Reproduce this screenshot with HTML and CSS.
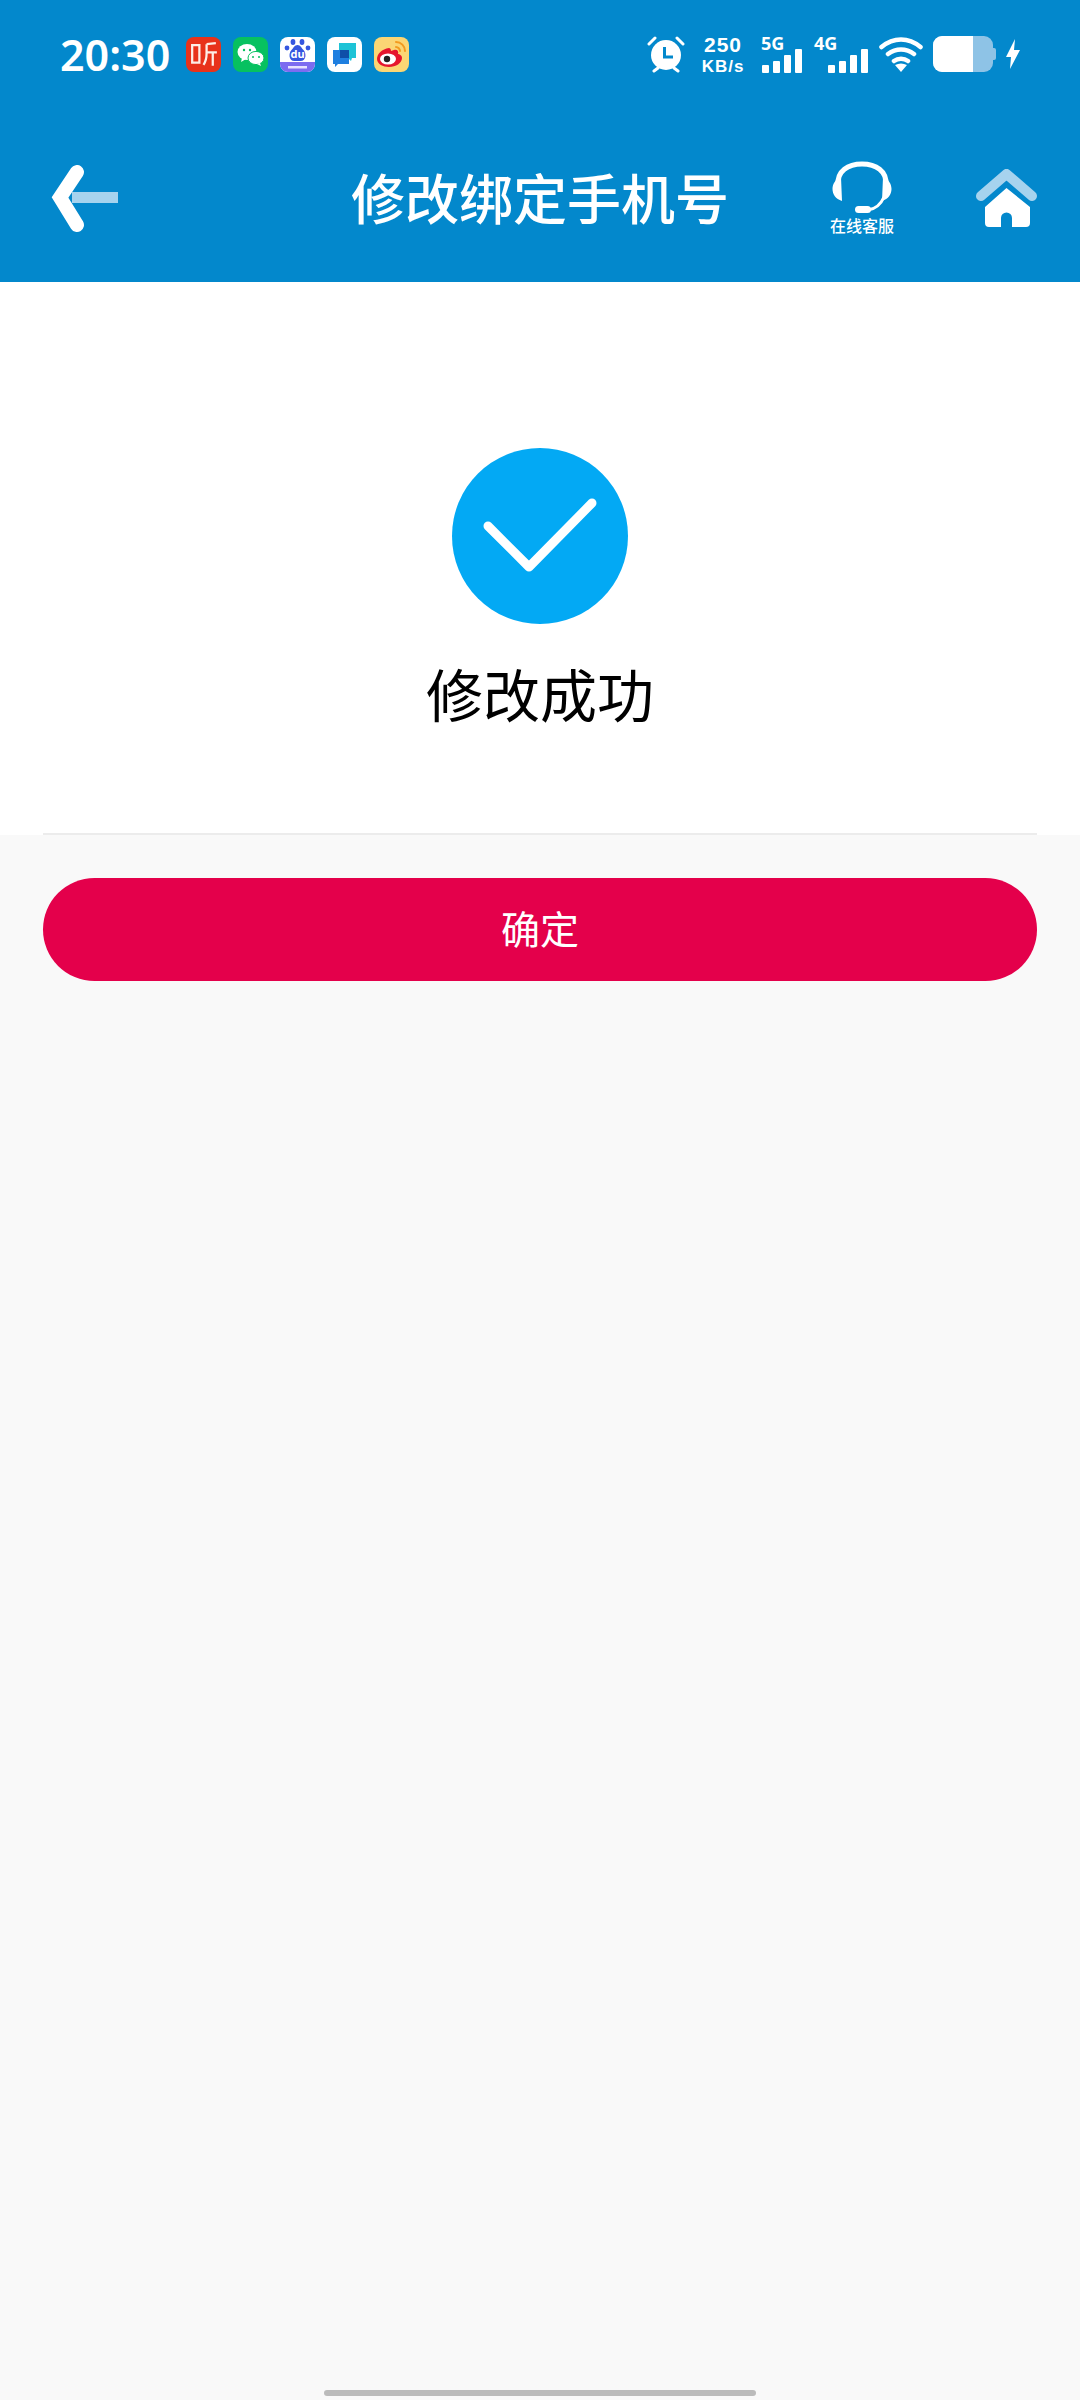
FILE: index.html
```html
<!DOCTYPE html>
<html lang="zh-CN">
<head>
	<meta charset="UTF-8">
	<title>修改绑定手机号</title>
	<link rel="stylesheet" href="styles.css">
</head>
<body>
	<div class="header">
		<div class="status">
			<div class="status-left">
				<span class="time">20:30</span>
				<div class="apps">
					<div class="app app-ting">
						<svg viewBox="0 0 34 34"><path d="M6 8h7v17H6zM20 7l9-1M20 7v9c0 5-1 8-3 11M20 15h10M26 15v13" fill="none" stroke="#fdeee6" stroke-width="2.200"/></svg>
					</div>
					<div class="app app-wechat">
						<svg viewBox="0 0 35 35"><ellipse cx="14" cy="15" rx="9.500" ry="8" fill="#fff"/><path d="M9 21l-1 4 5-3z" fill="#fff"/><ellipse cx="23" cy="21" rx="8" ry="6.600" fill="#fff" stroke="#07c160" stroke-width="1"/><path d="M27 26l1 3-4-2z" fill="#fff"/><circle cx="11" cy="13" r="1.200" fill="#07c160"/><circle cx="17" cy="13" r="1.200" fill="#07c160"/><circle cx="20" cy="20" r="1" fill="#07c160"/><circle cx="26" cy="20" r="1" fill="#07c160"/></svg>
					</div>
					<div class="app app-baidu">
						<svg viewBox="0 0 35 35"><path d="M0 25h35v5a5 5 0 0 1-5 5H5a5 5 0 0 1-5-5z" fill="#7c6cf0"/><ellipse cx="13" cy="5" rx="2.400" ry="3" fill="#3557e0"/><ellipse cx="22" cy="5" rx="2.400" ry="3" fill="#3557e0"/><circle cx="7" cy="11" r="2.400" fill="#3557e0"/><circle cx="28" cy="11" r="2.400" fill="#3557e0"/><path d="M17.500 8c3 0 4 3 6 5 3 3 3 11-3 11h-6c-6 0-6-8-3-11 2-2 3-5 6-5z" fill="#3557e0"/><text x="17.500" y="21" text-anchor="middle" class="app-du">du</text><rect x="8" y="29" width="19" height="2.500" fill="#e6e2ff"/></svg>
					</div>
					<div class="app app-msg">
						<svg viewBox="0 0 35 35"><path d="M12 6h17v15h-4l-1 3-3-3h-9z" fill="#1ec3d6"/><path d="M6 13h16v14H11l-3 3v-3H6z" fill="#1f7fe0"/><rect x="13" y="13" width="9" height="8" fill="#0f4fa8"/></svg>
					</div>
					<div class="app app-weibo">
						<svg viewBox="0 0 35 35"><path d="M15 11C8 12 3 17 3 22c0 5 6 8 12 8 7 0 13-4 13-9 0-3-3-4-4-4 1-3-1-5-4-4l-3 1c0-2-1-3-2-3z" fill="#e6162d"/><ellipse cx="14" cy="22" rx="8" ry="5.500" fill="#fff"/><circle cx="13" cy="22" r="3.200" fill="#222"/><path d="M22 5c5 0 9 4 9 9M22 10c2 0 4 2 4 4" fill="none" stroke="#f39a1f" stroke-width="2" stroke-linecap="round"/></svg>
					</div>
				</div>
			</div>
			<div class="status-right">
				<svg class="ic-alarm" viewBox="0 0 38 38">
					<circle cx="19" cy="20" r="15" fill="#fff"/>
					<path d="M17.500 12v10H26" fill="none" stroke="#0388cc" stroke-width="3"/>
					<path d="M2 9l6-6M36 9l-6-6M7 36l4-3M31 36l-4-3" stroke="#fff" stroke-width="3" stroke-linecap="round"/>
				</svg>
				<div class="speed"><span class="speed-num">250</span><span class="speed-unit">KB/s</span></div>
				<div class="net net-5g">
					<span class="net-label">5G</span>
					<div class="bars"><i class="bar-1"></i><i class="bar-2"></i><i class="bar-3"></i><i class="bar-4"></i></div>
				</div>
				<div class="net net-4g">
					<span class="net-label">4G</span>
					<div class="bars"><i class="bar-1"></i><i class="bar-2"></i><i class="bar-3"></i><i class="bar-4"></i></div>
				</div>
				<svg class="ic-wifi" viewBox="0 0 44 36">
					<path d="M2.500 11c12-10 27-10 39 0M9 18c8-6 18-6 26 0M15 25c4-3 10-3 14 0" fill="none" stroke="#fff" stroke-width="4.500" stroke-linecap="round"/>
					<path d="M16 29c4-2 8-2 12 0l-6 7z" fill="#fff"/>
				</svg>
				<div class="battery"><div class="battery-body"><div class="battery-fill"></div></div><div class="battery-tip"></div></div>
				<svg class="ic-bolt" viewBox="0 0 14 30"><path d="M9 0L0 18h5l-1 12 10-19H8z" fill="#fff"/></svg>
			</div>
		</div>
		<div class="nav">
			<div class="nav-left">
				<svg class="ic-back" viewBox="0 0 70 68">
					<rect x="22" y="27" width="46" height="11" fill="#a6d3ee"/>
					<path d="M27 7L10 32.500 27 60" fill="none" stroke="#fff" stroke-width="14" stroke-linecap="round" stroke-linejoin="miter"/>
				</svg>
			</div>
			<h1 class="nav-title">修改绑定手机号</h1>
			<div class="nav-right">
				<div class="service">
					<svg class="ic-headset" viewBox="0 0 60 52">
						<path d="M6 24C5 10 16 3 30 3s25 7 24 21" fill="none" stroke="#fff" stroke-width="5"/>
						<path d="M9 16C-2 20-3 36 10 40zM51 16c11 4 12 20-1 24z" fill="#fff"/>
						<path d="M52 36c-3 7-9 12-16 13" fill="none" stroke="#fff" stroke-width="3"/>
						<rect x="23" y="45" width="16" height="7" rx="3.500" fill="#fff"/>
					</svg>
					<span class="service-text">在线客服</span>
				</div>
				<svg class="ic-home" viewBox="0 0 62 60">
					<path d="M5 27L30.500 5 56 27" fill="none" stroke="#a6d3ee" stroke-width="10" stroke-linecap="round" stroke-linejoin="round"/>
					<path d="M30.500 19L54 38v16a4 4 0 0 1-4 4H36V49a5.500 5.500 0 0 0-11 0v9H13a4 4 0 0 1-4-4V38z" fill="#fff"/>
				</svg>
			</div>
		</div>
	</div>

	<div class="result">
		<div class="result-icon">
			<svg viewBox="0 0 176 176"><path d="M36 78l41 41 63-64" fill="none" stroke="#fff" stroke-width="9" stroke-linecap="round" stroke-linejoin="round"/></svg>
		</div>
		<p class="result-text">修改成功</p>
		<div class="result-line"></div>
	</div>

	<div class="actions">
		<button class="btn-ok">确定</button>
	</div>

	<div class="home-bar"></div>
</body>
</html>
```

FILE: styles.css
```css
* {
	margin: 0;
	padding: 0;
	box-sizing: border-box;
}
html, body {
	height: 100%;
}
body {
	position: relative;
	display: flex;
	flex-direction: column;
	background-color: #f9f9f9;
	font-family: "Noto Sans", "Noto Sans CJK SC", sans-serif;
	overflow: hidden;
}

/* header */
.header {
	height: 282px;
	background-color: #0388cc;
	color: #fff;
}
.status {
	display: flex;
	justify-content: space-between;
	align-items: center;
	height: 108px;
	padding: 0 60px;
}
.status-left {
	display: flex;
	align-items: center;
}
.time {
	width: 126px;
	font-size: 43px;
	font-weight: 600;
	line-height: 1;
}
.apps {
	display: flex;
	gap: 12px;
}
.app {
	width: 35px;
	height: 35px;
	border-radius: 8px;
	overflow: hidden;
}
.app svg {
	display: block;
	width: 100%;
	height: 100%;
}
.app-du {
	font-size: 11px;
	font-weight: 700;
	fill: #fff;
}
.app-ting {
	background-color: #e8321a;
}
.app-wechat {
	background-color: #07c160;
}
.app-baidu {
	background-color: #fff;
}
.app-msg {
	background-color: #fff;
}
.app-weibo {
	background-color: #fbd674;
}
.status-right {
	display: flex;
	align-items: center;
}
.ic-alarm {
	width: 38px;
	height: 38px;
	margin-right: 17px;
}
.speed {
	display: flex;
	flex-direction: column;
	align-items: center;
	width: 42px;
	margin-top: 2px;
	margin-right: 17px;
	font-family: "Liberation Sans", sans-serif;
	font-weight: 700;
}
.speed-num {
	font-size: 21px;
	line-height: 23px;
	letter-spacing: 1px;
}
.speed-unit {
	font-size: 17px;
	line-height: 21px;
	letter-spacing: 1px;
}
.net {
	position: relative;
	width: 41px;
	height: 37px;
	display: flex;
	align-items: flex-end;
	justify-content: flex-end;
}
.net-5g {
	margin-right: 12px;
}
.net-4g {
	width: 54px;
	margin-right: 11px;
}
.net-label {
	position: absolute;
	top: -3px;
	left: 0;
	font-size: 18px;
	font-weight: 700;
	line-height: 20px;
}
.bars {
	display: flex;
	align-items: flex-end;
	gap: 4px;
}
.bars i {
	display: block;
	width: 7px;
	border-radius: 1px;
	background-color: #fff;
}
.bars .bar-1 {
	height: 8px;
}
.bars .bar-2 {
	height: 12px;
}
.bars .bar-3 {
	height: 18px;
}
.bars .bar-4 {
	height: 24px;
}
.ic-wifi {
	width: 44px;
	height: 36px;
	margin-right: 10px;
}
.battery {
	display: flex;
	align-items: center;
	width: 63px;
	height: 36px;
}
.battery-body {
	width: 60px;
	height: 36px;
	border-radius: 9px;
	background-color: #8ec3e6;
	overflow: hidden;
}
.battery-fill {
	width: 40px;
	height: 100%;
	background-color: #fff;
}
.battery-tip {
	width: 3px;
	height: 12px;
	border-radius: 0 2px 2px 0;
	background-color: #8ec3e6;
}
.ic-bolt {
	width: 14px;
	height: 30px;
	margin-left: 10px;
}

/* nav */
.nav {
	display: grid;
	grid-template-columns: 1fr auto 1fr;
	align-items: center;
	height: 174px;
	padding: 7px 42px 0 50px;
}
.ic-back {
	display: block;
	width: 70px;
	height: 68px;
}
.nav-title {
	font-size: 54px;
	font-weight: 500;
	line-height: 1;
	margin-right: 8px;
}
.nav-right {
	display: flex;
	justify-content: flex-end;
	align-items: center;
	gap: 82px;
}
.service {
	display: flex;
	flex-direction: column;
	align-items: center;
}
.ic-headset {
	width: 60px;
	height: 52px;
	margin-bottom: 3px;
}
.service-text {
	font-size: 16px;
	font-weight: 500;
	line-height: 20px;
}
.ic-home {
	width: 62px;
	height: 60px;
}

/* result */
.result {
	display: flex;
	flex-direction: column;
	align-items: center;
	height: 553px;
	padding-top: 166px;
	background-color: #fff;
}
.result-icon {
	width: 176px;
	height: 176px;
	border-radius: 50%;
	background-color: #03a9f4;
}
.result-icon svg {
	display: block;
	width: 100%;
	height: 100%;
}
.result-text {
	margin-top: 29px;
	font-size: 57px;
	line-height: 84px;
	color: #000;
}
.result-line {
	width: 994px;
	height: 2px;
	margin-top: auto;
	background-color: #ececec;
}

/* button */
.actions {
	padding: 43px 43px 0;
}
.btn-ok {
	display: block;
	width: 100%;
	height: 103px;
	padding-bottom: 5px;
	border: none;
	border-radius: 52px;
	background-color: #e4004b;
	color: #fff;
	font-family: inherit;
	font-size: 39px;
}

.home-bar {
	position: absolute;
	left: 324px;
	bottom: 4px;
	width: 432px;
	height: 6px;
	border-radius: 3px;
	background-color: #bbb;
}
```
